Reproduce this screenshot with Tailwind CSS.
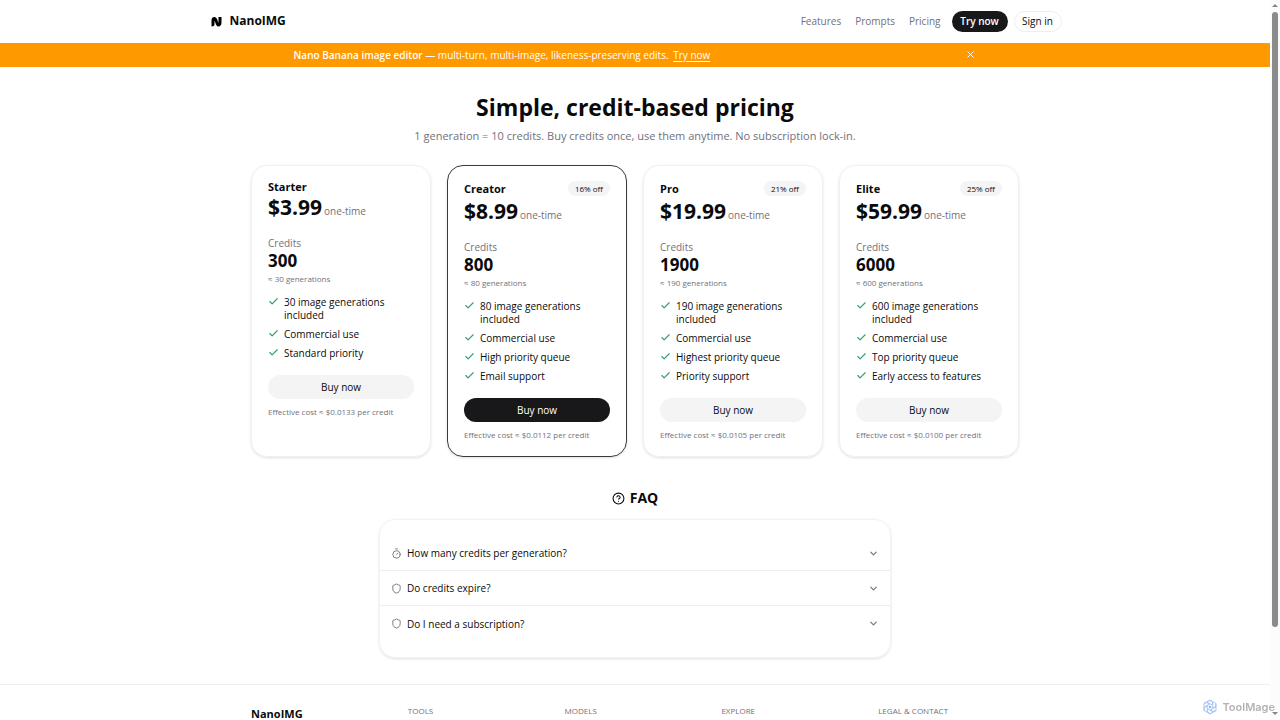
<!DOCTYPE html>
<html lang="en">
<head>
<meta charset="utf-8">
<meta name="viewport" content="width=device-width, initial-scale=1">
<title>NanoIMG Pricing</title>
<script src="https://cdn.jsdelivr.net/npm/@tailwindcss/browser@4"></script>
</head>
<body class="h-screen overflow-hidden bg-white font-['Open_Sans','Noto_Sans',sans-serif] text-[10px] leading-[14px] text-[#0a0a0a]">
<svg class="hidden" aria-hidden="true">
  <symbol id="check" viewBox="0 0 24 24" fill="none" stroke="currentColor" stroke-width="2.500" stroke-linecap="round" stroke-linejoin="round"><path d="M20 6 9 17l-5-5"/></symbol>
  <symbol id="chevron" viewBox="0 0 24 24" fill="none" stroke="currentColor" stroke-width="2.500" stroke-linecap="round" stroke-linejoin="round"><path d="m6 9 6 6 6-6"/></symbol>
  <symbol id="shield" viewBox="0 0 24 24" fill="none" stroke="currentColor" stroke-width="2" stroke-linecap="round" stroke-linejoin="round"><path d="M20 13c0 5-3.500 7.500-7.660 8.950a1 1 0 0 1-.67-.01C7.500 20.500 4 18 4 13V6a1 1 0 0 1 1-1c2 0 4.500-1.200 6.240-2.720a1.170 1.170 0 0 1 1.520 0C14.510 3.810 17 5 19 5a1 1 0 0 1 1 1z"/></symbol>
  <symbol id="timer" viewBox="0 0 24 24" fill="none" stroke="currentColor" stroke-width="2" stroke-linecap="round" stroke-linejoin="round"><path d="M10 2h4M12 14l3-3"/><circle cx="12" cy="14" r="8"/></symbol>
</svg>

<div class="mr-[10px]">
  <header class="h-[43px]">
    <div class="mx-auto flex h-[42px] max-w-[853px] items-center justify-between pl-[2px]">
      <a href="#" class="flex items-center gap-2 text-[12px] font-bold">
        <svg class="h-[11px] w-[11px]" viewBox="0 0 22 22" fill="#000"><path d="M1 21V9C1 0 10 0 12 6l3 8V2h6v11c0 10-9 10-11 4L7 9v8c0 2.500-2.500 4-6 4z"/></svg>
        NanoIMG
      </a>
      <nav class="flex items-center text-[#71717b]">
        <a href="#" class="mr-[14px]">Features</a>
        <a href="#" class="mr-[14px]">Prompts</a>
        <a href="#" class="mr-[11px]">Pricing</a>
        <a href="#" class="mr-[6px] flex h-[21px] w-14 items-center justify-center rounded-full bg-[#18181b] font-semibold text-white">Try now</a>
        <a href="#" class="flex h-[21px] w-12 items-center justify-center rounded-full border border-[#eeeeee] font-medium text-[#0a0a0a]">Sign in</a>
      </nav>
    </div>
  </header>

  <div class="bg-[#ff9900] pb-px text-white">
    <div class="mx-auto flex h-[23px] max-w-[683px] items-center justify-between">
      <p><strong class="font-semibold">Nano Banana image editor</strong> — multi-turn, multi-image, likeness-preserving edits. <a href="#" class="ml-[2px] underline underline-offset-2">Try now</a></p>
      <button type="button" aria-label="Dismiss" class="flex h-3 w-3 items-center justify-center"><svg class="h-[7px] w-[7px]" viewBox="0 0 14 14" fill="none" stroke="#fff" stroke-width="2"><path d="m1 1 12 12M13 1 1 13"/></svg></button>
    </div>
  </div>

  <main class="mx-auto max-w-[768px] pt-6">
    <div class="text-center">
      <h1 class="text-[23px] leading-8 font-bold">Simple, credit-based pricing</h1>
      <p class="mt-[5px] text-[11px] leading-4 text-[#71717b]">1 generation = 10 credits. Buy credits once, use them anytime. No subscription lock-in.</p>
    </div>

    <section id="plans" aria-label="Plans" class="mt-[21px] grid grid-cols-4 gap-4">
      <article class="rounded-2xl border border-[#f0f0f1] px-4 pt-[15px] pb-[14px] shadow-sm">
        <h2 class="text-[11px] leading-[11px] font-bold">Starter</h2>
        <p class="mt-px flex h-7 items-baseline gap-[2px] text-[#71717b]"><span class="text-[21px] leading-7 font-bold text-[#0a0a0a]">$3.99</span> one-time</p>
        <p class="mt-[15px] text-[#71717b]">Credits</p>
        <p class="text-[17px] leading-[22px] font-bold">300</p>
        <p class="text-[8px] text-[#71717b]">≈ 30 generations</p>
        <ul class="mt-[10px] flex flex-col gap-[6px] leading-[13px]">
          <li class="flex gap-[5px]"><svg class="h-[11px] w-[11px] shrink-0 text-[#2f9e6e]"><use href="#check"/></svg>30 image generations included</li>
          <li class="flex gap-[5px]"><svg class="h-[11px] w-[11px] shrink-0 text-[#2f9e6e]"><use href="#check"/></svg>Commercial use</li>
          <li class="flex gap-[5px]"><svg class="h-[11px] w-[11px] shrink-0 text-[#2f9e6e]"><use href="#check"/></svg>Standard priority</li>
        </ul>
        <button type="button" class="mt-[15px] h-6 w-full rounded-full bg-[#f4f4f5] font-medium">Buy now</button>
        <p class="mt-[6px] text-[8px] text-[#71717b]">Effective cost ≈ $0.0133 per credit</p>
      </article>

      <article class="rounded-2xl border border-[#3a3a3d] px-4 pt-[15px] pb-[14px] shadow-sm">
        <div class="flex h-[15px] items-center justify-between"><h2 class="text-[11px] font-bold">Creator</h2><span class="flex h-[15px] w-[42px] items-center justify-center rounded-full bg-[#f4f4f5] text-[8px] font-medium">16% off</span></div>
        <p class="mt-px flex h-7 items-baseline gap-[2px] text-[#71717b]"><span class="text-[21px] leading-7 font-bold text-[#0a0a0a]">$8.99</span> one-time</p>
        <p class="mt-[15px] text-[#71717b]">Credits</p>
        <p class="text-[17px] leading-[22px] font-bold">800</p>
        <p class="text-[8px] text-[#71717b]">≈ 80 generations</p>
        <ul class="mt-[10px] flex flex-col gap-[6px] leading-[13px]">
          <li class="flex gap-[5px]"><svg class="h-[11px] w-[11px] shrink-0 text-[#2f9e6e]"><use href="#check"/></svg>80 image generations included</li>
          <li class="flex gap-[5px]"><svg class="h-[11px] w-[11px] shrink-0 text-[#2f9e6e]"><use href="#check"/></svg>Commercial use</li>
          <li class="flex gap-[5px]"><svg class="h-[11px] w-[11px] shrink-0 text-[#2f9e6e]"><use href="#check"/></svg>High priority queue</li>
          <li class="flex gap-[5px]"><svg class="h-[11px] w-[11px] shrink-0 text-[#2f9e6e]"><use href="#check"/></svg>Email support</li>
        </ul>
        <button type="button" class="mt-[15px] h-6 w-full rounded-full bg-[#18181b] font-medium text-white">Buy now</button>
        <p class="mt-[6px] text-[8px] text-[#71717b]">Effective cost ≈ $0.0112 per credit</p>
      </article>

      <article class="rounded-2xl border border-[#f0f0f1] px-4 pt-[15px] pb-[14px] shadow-sm">
        <div class="flex h-[15px] items-center justify-between"><h2 class="text-[11px] font-bold">Pro</h2><span class="flex h-[15px] w-[42px] items-center justify-center rounded-full bg-[#f4f4f5] text-[8px] font-medium">21% off</span></div>
        <p class="mt-px flex h-7 items-baseline gap-[2px] text-[#71717b]"><span class="text-[21px] leading-7 font-bold text-[#0a0a0a]">$19.99</span> one-time</p>
        <p class="mt-[15px] text-[#71717b]">Credits</p>
        <p class="text-[17px] leading-[22px] font-bold">1900</p>
        <p class="text-[8px] text-[#71717b]">≈ 190 generations</p>
        <ul class="mt-[10px] flex flex-col gap-[6px] leading-[13px]">
          <li class="flex gap-[5px]"><svg class="h-[11px] w-[11px] shrink-0 text-[#2f9e6e]"><use href="#check"/></svg>190 image generations included</li>
          <li class="flex gap-[5px]"><svg class="h-[11px] w-[11px] shrink-0 text-[#2f9e6e]"><use href="#check"/></svg>Commercial use</li>
          <li class="flex gap-[5px]"><svg class="h-[11px] w-[11px] shrink-0 text-[#2f9e6e]"><use href="#check"/></svg>Highest priority queue</li>
          <li class="flex gap-[5px]"><svg class="h-[11px] w-[11px] shrink-0 text-[#2f9e6e]"><use href="#check"/></svg>Priority support</li>
        </ul>
        <button type="button" class="mt-[15px] h-6 w-full rounded-full bg-[#f4f4f5] font-medium">Buy now</button>
        <p class="mt-[6px] text-[8px] text-[#71717b]">Effective cost ≈ $0.0105 per credit</p>
      </article>

      <article class="rounded-2xl border border-[#f0f0f1] px-4 pt-[15px] pb-[14px] shadow-sm">
        <div class="flex h-[15px] items-center justify-between"><h2 class="text-[11px] font-bold">Elite</h2><span class="flex h-[15px] w-[42px] items-center justify-center rounded-full bg-[#f4f4f5] text-[8px] font-medium">25% off</span></div>
        <p class="mt-px flex h-7 items-baseline gap-[2px] text-[#71717b]"><span class="text-[21px] leading-7 font-bold text-[#0a0a0a]">$59.99</span> one-time</p>
        <p class="mt-[15px] text-[#71717b]">Credits</p>
        <p class="text-[17px] leading-[22px] font-bold">6000</p>
        <p class="text-[8px] text-[#71717b]">≈ 600 generations</p>
        <ul class="mt-[10px] flex flex-col gap-[6px] leading-[13px]">
          <li class="flex gap-[5px]"><svg class="h-[11px] w-[11px] shrink-0 text-[#2f9e6e]"><use href="#check"/></svg>600 image generations included</li>
          <li class="flex gap-[5px]"><svg class="h-[11px] w-[11px] shrink-0 text-[#2f9e6e]"><use href="#check"/></svg>Commercial use</li>
          <li class="flex gap-[5px]"><svg class="h-[11px] w-[11px] shrink-0 text-[#2f9e6e]"><use href="#check"/></svg>Top priority queue</li>
          <li class="flex gap-[5px]"><svg class="h-[11px] w-[11px] shrink-0 text-[#2f9e6e]"><use href="#check"/></svg>Early access to features</li>
        </ul>
        <button type="button" class="mt-[15px] h-6 w-full rounded-full bg-[#f4f4f5] font-medium">Buy now</button>
        <p class="mt-[6px] text-[8px] text-[#71717b]">Effective cost ≈ $0.0100 per credit</p>
      </article>
    </section>

    <section class="mx-auto mt-8 max-w-[512px]">
      <h2 class="flex items-center justify-center gap-[5px] text-[14px] leading-[18px] font-bold">
        <svg class="h-[13px] w-[13px]" viewBox="0 0 24 24" fill="none" stroke="currentColor" stroke-width="2" stroke-linecap="round" stroke-linejoin="round"><circle cx="12" cy="12" r="10"/><path d="M9.090 9a3 3 0 0 1 5.830 1c0 2-3 3-3 3M12 17h.01"/></svg>
        FAQ
      </h2>
      <div class="mt-3 rounded-2xl border border-[#f3f3f4] py-4 shadow-sm">
        <button type="button" class="flex h-[35px] w-full items-center border-b border-[#eeeeee] px-[11px] font-medium"><svg class="mr-[5px] h-[11px] w-[11px] text-[#71717b]"><use href="#timer"/></svg>How many credits per generation?<svg class="ml-auto h-[11px] w-[11px] text-[#71717b]"><use href="#chevron"/></svg></button>
        <button type="button" class="flex h-[35px] w-full items-center border-b border-[#eeeeee] px-[11px] font-medium"><svg class="mr-[5px] h-[11px] w-[11px] text-[#71717b]"><use href="#shield"/></svg>Do credits expire?<svg class="ml-auto h-[11px] w-[11px] text-[#71717b]"><use href="#chevron"/></svg></button>
        <button type="button" class="flex h-[35px] w-full items-center px-[11px] font-medium"><svg class="mr-[5px] h-[11px] w-[11px] text-[#71717b]"><use href="#shield"/></svg>Do I need a subscription?<svg class="ml-auto h-[11px] w-[11px] text-[#71717b]"><use href="#chevron"/></svg></button>
      </div>
    </section>
  </main>

  <footer class="mt-[26px] border-t border-[#eeeeee] pt-5">
    <div class="mx-auto grid max-w-[768px] grid-cols-5 gap-4 text-[8px] leading-3 text-[#71717b]">
      <p class="text-[11px] leading-[18px] font-bold text-[#0a0a0a]">NanoIMG</p>
      <h3>TOOLS</h3>
      <h3>MODELS</h3>
      <h3>EXPLORE</h3>
      <h3>LEGAL &amp; CONTACT</h3>
    </div>
  </footer>
</div>

<div class="fixed inset-y-0 right-0 flex w-[10px] flex-col items-center bg-[#fcfcfc] pt-1 pb-[5px]" aria-hidden="true">
  <svg class="h-[3px] w-[6px]" viewBox="0 0 6 3" fill="#858585"><path d="M3 0 6 3H0z"/></svg>
  <div class="mt-[5px] h-[615px] w-[6px] rounded-full bg-[#8b8b8b]"></div>
  <svg class="mt-auto h-[3px] w-[6px]" viewBox="0 0 6 3" fill="#858585"><path d="M0 0h6L3 3z"/></svg>
</div>

<div class="fixed right-[5px] bottom-[5px] flex items-center gap-[4px] font-['Inter','Open_Sans',sans-serif] text-[11px] leading-4 font-semibold text-[#b3b3b3]">
  <svg class="h-4 w-4" viewBox="0 0 24 24" fill="none" stroke="#a9c4f0" stroke-width="1.500" stroke-linejoin="round">
    <g id="petal"><path d="M12 1.500 16 4l-1 5-6-3.500M16 4l4.500 2.500V12"/></g>
    <use href="#petal" transform="rotate(60 12 12)"/><use href="#petal" transform="rotate(120 12 12)"/><use href="#petal" transform="rotate(180 12 12)"/><use href="#petal" transform="rotate(240 12 12)"/><use href="#petal" transform="rotate(300 12 12)"/>
    <circle cx="12" cy="12" r="2" fill="#8fb3ee" stroke="none"/>
  </svg>
  ToolMage
</div>
</body>
</html>
